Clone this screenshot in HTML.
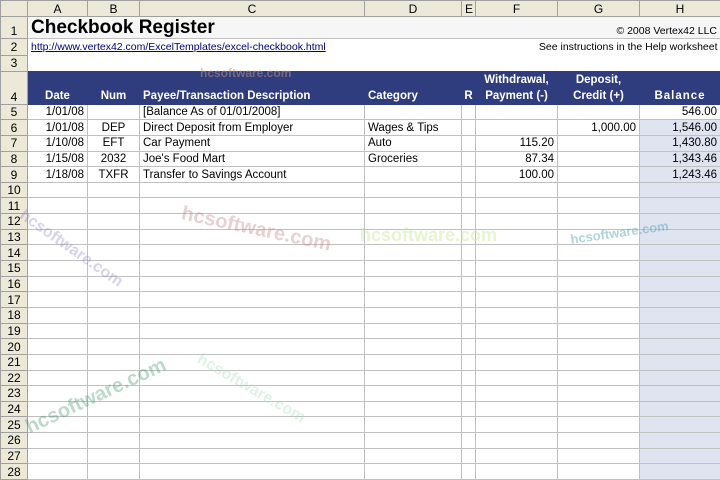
<!DOCTYPE html>
<html><head><meta charset="utf-8"><style>
*{margin:0;padding:0;box-sizing:border-box}
body{width:720px;height:480px;overflow:hidden;background:#fff;font-family:"Liberation Sans",Arial,sans-serif;position:relative}
table{border-collapse:collapse;table-layout:fixed;width:720px;position:absolute;left:0;top:0}
td{border:1px solid #c0c0c0;font-size:11.5px;padding:0 3px;white-space:nowrap;overflow:hidden;color:#000;height:15.65px;line-height:14px}
tr.ch td{background:#ece9d8;text-align:center;height:16px;border-color:#a0a0a0;font-size:12px}
td.rn{background:#ece9d8;text-align:center;border-color:#a0a0a0;font-size:12px;padding:0}
.r{text-align:right}.c{text-align:center}
.h td.b{background:#2f3d7e;color:#fff;font-weight:bold;vertical-align:bottom;border-color:#2f3d7e;font-size:11.5px;line-height:16px}
.s{background:#dfe4f0}
.wm{position:absolute;font-weight:bold;font-family:"Liberation Sans",sans-serif;pointer-events:none;white-space:nowrap}
</style></head><body>
<table>
<colgroup><col style="width:27px"><col style="width:60px"><col style="width:52px"><col style="width:225px"><col style="width:97px"><col style="width:14px"><col style="width:82px"><col style="width:82px"><col style="width:81px"></colgroup>
<tr class="ch"><td></td><td>A</td><td>B</td><td>C</td><td>D</td><td>E</td><td>F</td><td>G</td><td>H</td></tr>
<tr style="background:#f6f6f6"><td class="rn" style="height:22px;vertical-align:bottom">1</td><td colspan="4" style="font-size:19px;font-weight:bold;border-right:none;border-left:none;line-height:20px">Checkbook Register</td><td colspan="4" class="r" style="vertical-align:bottom;font-size:10.5px;border-left:none">© 2008 Vertex42 LLC</td></tr>
<tr><td class="rn" style="height:17px">2</td><td colspan="4" style="font-size:10.5px;color:#000080;text-decoration:underline;border:none">http://www.vertex42.com/ExcelTemplates/excel-checkbook.html</td><td colspan="4" class="r" style="font-size:10.5px;border:none">See instructions in the Help worksheet</td></tr>
<tr><td class="rn" style="height:14px">3</td><td colspan="8" style="border:none"></td></tr>
<tr class="h"><td class="rn" style="height:33px;vertical-align:bottom">4</td><td class="b c">Date</td><td class="b c">Num</td><td class="b">Payee/Transaction Description</td><td class="b">Category</td><td class="b c" style="padding:0">R</td><td class="b c" style="padding:0">Withdrawal,<br>Payment (-)</td><td class="b c">Deposit,<br>Credit (+)</td><td class="b c" style="letter-spacing:1px">Balance</td></tr>
<tr><td class="rn">5</td><td class="r">1/01/08</td><td></td><td>[Balance As of 01/01/2008]</td><td></td><td></td><td></td><td></td><td class="r">546.00</td></tr>
<tr><td class="rn">6</td><td class="r">1/01/08</td><td class="c">DEP</td><td>Direct Deposit from Employer</td><td>Wages &amp; Tips</td><td></td><td></td><td class="r">1,000.00</td><td class="r s">1,546.00</td></tr>
<tr><td class="rn">7</td><td class="r">1/10/08</td><td class="c">EFT</td><td>Car Payment</td><td>Auto</td><td></td><td class="r">115.20</td><td></td><td class="r s">1,430.80</td></tr>
<tr><td class="rn">8</td><td class="r">1/15/08</td><td class="c">2032</td><td>Joe's Food Mart</td><td>Groceries</td><td></td><td class="r">87.34</td><td></td><td class="r s">1,343.46</td></tr>
<tr><td class="rn">9</td><td class="r">1/18/08</td><td class="c">TXFR</td><td>Transfer to Savings Account</td><td></td><td></td><td class="r">100.00</td><td></td><td class="r s">1,243.46</td></tr>
<tr><td class="rn">10</td><td></td><td></td><td></td><td></td><td></td><td></td><td></td><td class="s"></td></tr>
<tr><td class="rn">11</td><td></td><td></td><td></td><td></td><td></td><td></td><td></td><td class="s"></td></tr>
<tr><td class="rn">12</td><td></td><td></td><td></td><td></td><td></td><td></td><td></td><td class="s"></td></tr>
<tr><td class="rn">13</td><td></td><td></td><td></td><td></td><td></td><td></td><td></td><td class="s"></td></tr>
<tr><td class="rn">14</td><td></td><td></td><td></td><td></td><td></td><td></td><td></td><td class="s"></td></tr>
<tr><td class="rn">15</td><td></td><td></td><td></td><td></td><td></td><td></td><td></td><td class="s"></td></tr>
<tr><td class="rn">16</td><td></td><td></td><td></td><td></td><td></td><td></td><td></td><td class="s"></td></tr>
<tr><td class="rn">17</td><td></td><td></td><td></td><td></td><td></td><td></td><td></td><td class="s"></td></tr>
<tr><td class="rn">18</td><td></td><td></td><td></td><td></td><td></td><td></td><td></td><td class="s"></td></tr>
<tr><td class="rn">19</td><td></td><td></td><td></td><td></td><td></td><td></td><td></td><td class="s"></td></tr>
<tr><td class="rn">20</td><td></td><td></td><td></td><td></td><td></td><td></td><td></td><td class="s"></td></tr>
<tr><td class="rn">21</td><td></td><td></td><td></td><td></td><td></td><td></td><td></td><td class="s"></td></tr>
<tr><td class="rn">22</td><td></td><td></td><td></td><td></td><td></td><td></td><td></td><td class="s"></td></tr>
<tr><td class="rn">23</td><td></td><td></td><td></td><td></td><td></td><td></td><td></td><td class="s"></td></tr>
<tr><td class="rn">24</td><td></td><td></td><td></td><td></td><td></td><td></td><td></td><td class="s"></td></tr>
<tr><td class="rn">25</td><td></td><td></td><td></td><td></td><td></td><td></td><td></td><td class="s"></td></tr>
<tr><td class="rn">26</td><td></td><td></td><td></td><td></td><td></td><td></td><td></td><td class="s"></td></tr>
<tr><td class="rn">27</td><td></td><td></td><td></td><td></td><td></td><td></td><td></td><td class="s"></td></tr>
<tr><td class="rn">28</td><td></td><td></td><td></td><td></td><td></td><td></td><td></td><td class="s"></td></tr>
</table>
<div class="wm" style="left:180px;top:218px;font-size:20px;color:rgba(190,120,130,.35);transform:rotate(12deg)">hcsoftware.com</div>
<div class="wm" style="left:360px;top:225px;font-size:18px;color:rgba(200,230,150,.45)">hcsoftware.com</div>
<div class="wm" style="left:570px;top:225px;font-size:13px;color:rgba(80,160,180,.45);transform:rotate(-8deg)">hcsoftware.com</div>
<div class="wm" style="left:10px;top:240px;font-size:16px;color:rgba(140,130,190,.35);transform:rotate(35deg)">hcsoftware.com</div>
<div class="wm" style="left:20px;top:385px;font-size:20px;color:rgba(60,150,110,.35);transform:rotate(-25deg)">hcsoftware.com</div>
<div class="wm" style="left:190px;top:380px;font-size:16px;color:rgba(160,220,180,.35);transform:rotate(30deg)">hcsoftware.com</div>
<div class="wm" style="left:200px;top:66px;font-size:12px;color:rgba(200,150,120,.5)">hcsoftware.com</div>
</body></html>
